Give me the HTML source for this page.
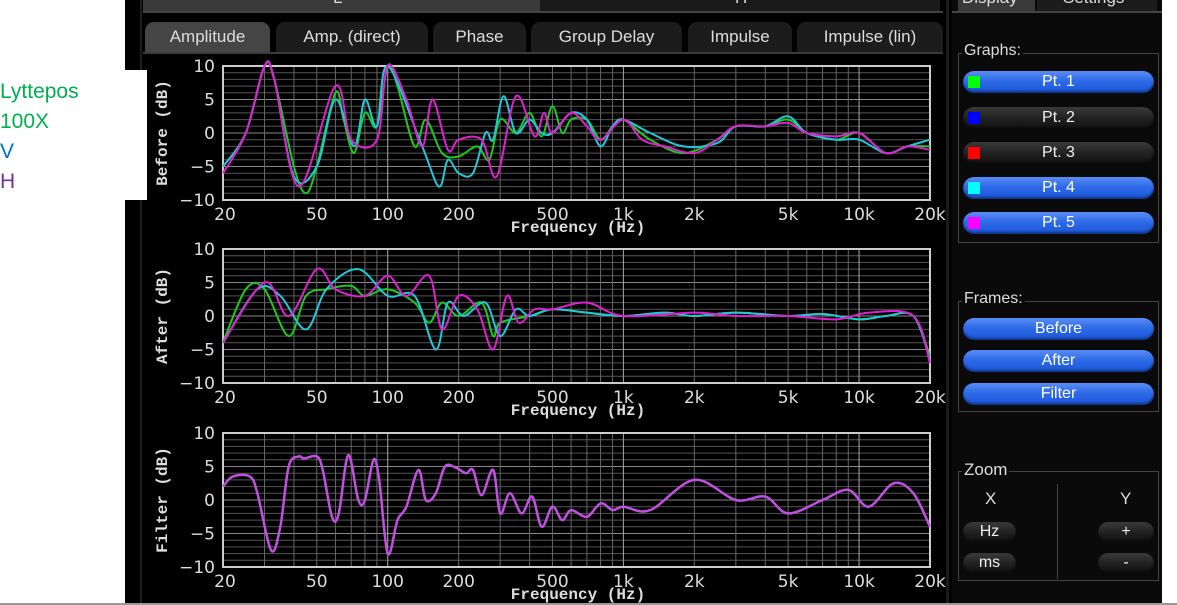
<!DOCTYPE html>
<html><head><meta charset="utf-8"><style>
body{margin:0;width:1177px;height:605px;background:#fff;position:relative;overflow:hidden;font-family:"Liberation Sans",sans-serif}
.a{position:absolute}
.btn{position:absolute;height:22px;border-radius:11px;background:linear-gradient(#5a8cf5,#2e6be8 45%,#1a55d8);color:#fff;font-size:16px;text-align:center;line-height:22px;box-shadow:inset 0 -2px 2px rgba(0,0,0,.4)}
.dk{background:linear-gradient(#3a3a3a,#222 50%,#111);color:#eee}
.sq{position:absolute;left:5px;top:5px;width:12px;height:12px}
.tab{position:absolute;top:22px;height:30px;border-radius:9px 9px 0 0;background:#1c1c1c;color:#ddd;font-size:17px;text-align:center;line-height:30px}
.box{position:absolute;border:1px solid #444}
.lbl{position:absolute;background:#0a0a0a;color:#ddd;font-size:16px;padding:0 2px}
</style></head><body>
<div class="a" style="left:125px;top:0;width:1037px;height:603px;background:#000"></div>
<div class="a" style="left:0;top:603px;width:1177px;height:2px;background:#999"></div>
<div class="a" style="left:140px;top:0;width:2px;height:603px;background:#1e1e1e"></div>
<div class="a" style="left:143px;top:0;width:397px;height:11px;background:#3a3a3a;overflow:hidden"><div style="position:absolute;left:190px;top:-12px;color:#ddd;font-size:17px">L</div></div>
<div class="a" style="left:540px;top:0;width:400px;height:11px;background:#1a1a1a;overflow:hidden"><div style="position:absolute;left:195px;top:-12px;color:#ddd;font-size:17px">H</div></div>
<div class="a" style="left:143px;top:11px;width:800px;height:2px;background:#444"></div>
<div class="tab" style="left:145px;width:125px;background:#454545">Amplitude</div>
<div class="tab" style="left:276px;width:152px">Amp. (direct)</div>
<div class="tab" style="left:433px;width:93px">Phase</div>
<div class="tab" style="left:531px;width:151px">Group Delay</div>
<div class="tab" style="left:688px;width:104px">Impulse</div>
<div class="tab" style="left:797px;width:146px">Impulse (lin)</div>
<div class="a" style="left:143px;top:52px;width:800px;height:2px;background:#3a3a3a"></div>
<div class="a" style="left:946px;top:0;width:3px;height:603px;background:#1a1a1a"></div>
<div class="a" style="left:952px;top:0;width:210px;height:603px;background:#0a0a0a"></div>
<div class="a" style="left:958px;top:0;width:77px;height:11px;background:#3a3a3a;overflow:hidden"><div style="position:absolute;left:4px;top:-12px;color:#ddd;font-size:17px">Display</div></div>
<div class="a" style="left:1037px;top:0;width:120px;height:11px;background:#1c1c1c;overflow:hidden"><div style="position:absolute;left:26px;top:-12px;color:#ddd;font-size:17px">Settings</div></div>
<div class="a" style="left:952px;top:11px;width:210px;height:2px;background:#444"></div>
<div class="box" style="left:958px;top:53px;width:199px;height:188px"></div>
<div class="lbl" style="left:962px;top:42px">Graphs:</div>
<div class="btn" style="left:963px;top:71px;width:191px"><span class="sq" style="background:#0f0"></span>Pt. 1</div>
<div class="btn dk" style="left:963px;top:107px;width:191px"><span class="sq" style="background:#00f"></span>Pt. 2</div>
<div class="btn dk" style="left:963px;top:142px;width:191px"><span class="sq" style="background:#f00"></span>Pt. 3</div>
<div class="btn" style="left:963px;top:177px;width:191px"><span class="sq" style="background:#0ff"></span>Pt. 4</div>
<div class="btn" style="left:963px;top:212px;width:191px"><span class="sq" style="background:#f0f"></span>Pt. 5</div>
<div class="box" style="left:958px;top:301px;width:199px;height:109px"></div>
<div class="lbl" style="left:962px;top:290px">Frames:</div>
<div class="btn" style="left:963px;top:318px;width:191px">Before</div>
<div class="btn" style="left:963px;top:350px;width:191px">After</div>
<div class="btn" style="left:963px;top:383px;width:191px">Filter</div>
<div class="box" style="left:958px;top:471px;width:199px;height:108px"></div>
<div class="lbl" style="left:962px;top:460px;font-size:17px">Zoom</div>
<div class="a" style="left:1057px;top:484px;width:1px;height:95px;background:#444"></div>
<div class="a" style="left:985px;top:489px;color:#ddd;font-size:17px">X</div>
<div class="a" style="left:1120px;top:489px;color:#ddd;font-size:17px">Y</div>
<div class="btn dk" style="left:963px;top:522px;width:53px;height:20px;line-height:20px">Hz</div>
<div class="btn dk" style="left:963px;top:553px;width:53px;height:20px;line-height:20px">ms</div>
<div class="btn dk" style="left:1098px;top:522px;width:56px;height:20px;line-height:20px">+</div>
<div class="btn dk" style="left:1098px;top:553px;width:56px;height:20px;line-height:20px">-</div>
<svg id="g" class="a" style="left:0;top:0" width="1177" height="605"></svg>
<div class="a" style="left:0;top:70px;width:147px;height:130px;background:#fff"></div>
<div class="a" style="left:0;top:77px;font-family:'Liberation Sans',sans-serif;font-size:21px;line-height:30px">
<div style="color:#00b050">Lyttepos</div><div style="color:#00b050">100X</div><div style="color:#0070c0">V</div><div style="color:#7030a0">H</div></div>
<script>
const S='http://www.w3.org/2000/svg',g=document.getElementById('g');
const X0=223,X1=930;
const fx=f=>X0+Math.log10(f/20)/3*(X1-X0);
function el(t,a,txt){const e=document.createElementNS(S,t);for(const k in a)e.setAttribute(k,a[k]);if(txt!=null)e.textContent=txt;g.appendChild(e);return e}
function path(pts,y0,color,w){const fy=d=>y0+(10-d)/20*134;const p=pts.map(q=>[fx(q[0]),fy(q[1])]);
let d='M'+p[0][0].toFixed(1)+' '+p[0][1].toFixed(1);
for(let i=0;i<p.length-1;i++){const a=p[i-1]||p[i],b=p[i],c=p[i+1],e=p[i+2]||c;
d+=' C'+(b[0]+(c[0]-a[0])/6).toFixed(1)+' '+(b[1]+(c[1]-a[1])/6).toFixed(1)+' '+(c[0]-(e[0]-b[0])/6).toFixed(1)+' '+(c[1]-(e[1]-b[1])/6).toFixed(1)+' '+c[0].toFixed(1)+' '+c[1].toFixed(1)}
el('path',{d:d,fill:'none',stroke:color,'stroke-width':w||2})}
function frame(y0,name){
const h=134;
for(let i=0;i<=20;i++){const y=y0+i*h/20;el('line',{x1:X0,x2:X1,y1:y,y2:y,stroke:i%5==0?'#888':'#555','stroke-width':1})}
[30,40,50,60,70,80,90,100,200,300,400,500,600,700,800,900,1000,2000,3000,4000,5000,6000,7000,8000,9000,10000].forEach(f=>{const x=fx(f);el('line',{x1:x,x2:x,y1:y0,y2:y0+h,stroke:(f==100||f==1000||f==10000)?'#aaa':'#666','stroke-width':1})});
el('rect',{x:X0,y:y0,width:X1-X0,height:h,fill:'none',stroke:'#ccc','stroke-width':2});
[[10,0],[5,1],[0,2],[-5,3],[-10,4]].forEach(([v,i])=>el('text',{x:215,y:y0+i*h/4+6,'text-anchor':'end',fill:'#ddd','font-size':17,'font-family':'DejaVu Sans'},String(v).replace('-','\u2212')));
[[20,'20'],[50,'50'],[100,'100'],[200,'200'],[500,'500'],[1000,'1k'],[2000,'2k'],[5000,'5k'],[10000,'10k'],[20000,'20k']].forEach(([f,t])=>el('text',{x:fx(f)+(f==20?2:0),y:y0+h+20,'text-anchor':'middle',fill:'#ddd','font-size':17,'font-family':'DejaVu Sans'},t));
el('text',{x:578,y:y0+h+32,'text-anchor':'middle',fill:'#ddd','font-size':16,'font-weight':'bold','font-family':'Liberation Mono'},'Frequency (Hz)');
el('text',{x:0,y:0,transform:'translate(167 '+(y0+h/2)+') rotate(-90)','text-anchor':'middle',fill:'#ddd','font-size':16,'font-weight':'bold','font-family':'Liberation Mono'},name);
}
frame(66,'Before (dB)');frame(249,'After (dB)');frame(433,'Filter (dB)');
const tail=[[700,2],[800,-1],[900,1],[1000,2],[1300,-1],[1800,-3],[2500,-1],[3000,1],[4000,1],[5000,2],[6000,0],[8000,-1],[10000,0],[13000,-3],[16000,-2],[20000,-2]];
path([[20,-5],[25,0],[30,10],[33,8],[40,-5],[45,-9],[50,-5],[60,6],[65,2],[72,-3],[80,3],[90,1],[100,10],[110,7],[130,-2],[145,2],[170,-3],[200,-3.5],[240,-2],[270,-4],[300,2],[350,0],[400,3],[450,-0.5],[500,4],[550,0],[600,2]].concat(tail),66,'#1ec81e');
path([[20,-5],[25,0],[30,10],[33,8],[40,-6.5],[50,-5],[60,5],[72,-2],[80,5],[90,1],[100,10],[140,-2],[165,-8],[180,-4],[200,-6],[230,-6],[260,0],[280,-1],[310,5.5],[350,0],[400,2],[450,0],[500,0],[600,3],[700,2],[800,-2],[900,1],[1000,2],[1300,0],[1800,-2],[2500,-1.5],[3000,1],[4000,1],[5000,2.5],[6000,0],[8000,-1],[10000,-1],[13000,-3],[16000,-2],[20000,-1]],66,'#20c8d8');
path([[20,-6],[25,0],[30,10],[33,8],[42,-8],[60,7],[70,-1],[90,-1],[100,10],[120,5],[140,-2],[155,5],[180,-2.5],[200,-1],[250,-1],[290,-6.5],[350,5.5],[420,-0.5],[460,3],[500,0],[600,3],[700,1],[800,-1],[1000,2],[1200,-1],[1500,-2],[2000,-3],[2500,-1],[3000,1],[4000,1],[5000,1.5],[6000,0],[8000,-0.5],[10000,0],[13000,-3],[16000,-2],[20000,-2.5]],66,'#e020d0');
const atail=[[500,1],[700,0.5],[1000,0],[1500,0.5],[2000,0],[3000,0.5],[5000,0],[7000,0.3],[10000,-0.5],[13000,0],[17000,0]];
path([[20,-4],[25,4],[30,4],[38,-3],[45,3],[55,4],[70,4.5],[80,3],[100,4],[130,2],[150,-1],[170,2],[200,0],[250,2],[280,-3],[300,-1],[400,0]].concat(atail,[[20000,-6]]),249,'#1ec81e');
path([[20,-4],[28,4],[35,3],[45,-2],[55,4],[75,7],[100,3],[130,3],[160,-5],[180,2],[210,0],[260,2],[300,-3],[350,1],[400,0]].concat(atail,[[20000,-6.5]]),249,'#20c8d8');
path([[20,-4],[30,5],[38,0],[50,7],[60,4],[80,3],[100,6],[120,3],[150,6],[170,-2],[200,3],[240,1],[280,-5],[320,3],[360,-1],[420,1],[500,1],[700,2],[1000,0],[2000,0.5],[3000,0],[5000,0],[8000,-0.5],[11000,0.5],[17000,0],[20000,-7]],249,'#e020d0');
path([[20,2],[22,3.5],[26,3.5],[28,1],[32,-7.5],[35,-4],[38,5],[42,6.5],[44,6.2],[50,6.5],[53,4.5],[58,-2.5],[62,-2],[68,6.7],[75,0],[80,0],[87,6],[92,3],[100,-8],[110,-3],[120,-1],[135,4.5],[145,0],[160,1],[175,5],[195,4.8],[215,4],[230,4.5],[250,0.7],[280,4.5],[300,-2],[330,1],[370,-2],[410,0.5],[450,-4],[500,-1],[550,-3],[600,-1.5],[700,-2.5],[800,-0.5],[900,-1.5],[1000,-1],[1300,-1.5],[2000,3],[3000,0],[4000,0.5],[5000,-2],[7000,0],[9000,1.5],[11000,-1],[14000,2.5],[17000,1],[20000,-4]],433,'#c050e0',2.5);
</script>
</body></html>
